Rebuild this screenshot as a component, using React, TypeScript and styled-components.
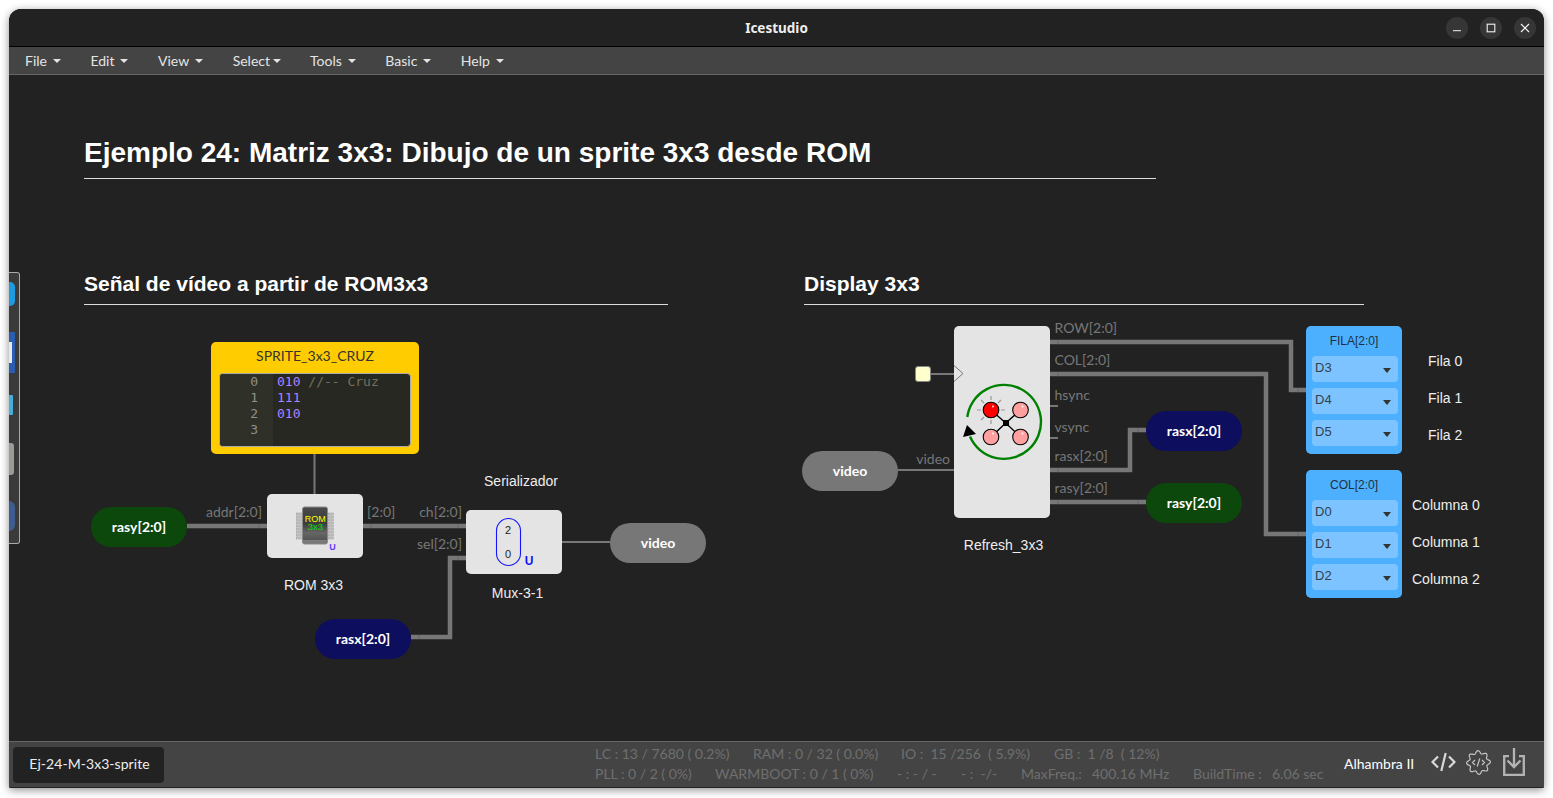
import React from "react";
import styled, { createGlobalStyle } from "styled-components";

const OX = 9;
const OY = 75;

const Global = createGlobalStyle`
  html, body { margin: 0; padding: 0; background: #fff; overflow: hidden; }
  #root { width: 1553px; height: 798px; }
`;

const Desktop = styled.div`
  width: 1553px;
  height: 798px;
  padding: 9px;
  box-sizing: border-box;
  background: #fff;
`;

const Win = styled.div`
  width: 1535px;
  height: 779px;
  display: flex;
  flex-direction: column;
  border-radius: 12px 12px 2px 2px;
  overflow: hidden;
  background: #222;
  box-shadow: 0 2px 8px rgba(0, 0, 0, 0.45);
  font-family: Lato, "Liberation Sans", sans-serif;
`;

const TitleBar = styled.div`
  height: 37px;
  flex: none;
  background: #222;
  border-bottom: 1px solid #000;
  display: flex;
  align-items: center;
  justify-content: center;
  position: relative;
`;

const TitleText = styled.div`
  font-family: "Noto Sans", sans-serif;
  font-weight: 700;
  font-size: 13.5px;
  color: #eee;
`;

const WinButtons = styled.div`
  position: absolute;
  right: 8px;
  top: 8px;
  display: flex;
  gap: 12px;
`;

const WinBtn = styled.div`
  width: 22px;
  height: 22px;
  border-radius: 50%;
  background: #363636;
  display: flex;
  align-items: center;
  justify-content: center;
`;

const MenuBar = styled.div`
  height: 27px;
  flex: none;
  background: #444;
  border-bottom: 1px solid #666;
  display: flex;
  align-items: center;
  padding-left: 1px;
`;

const MenuItem = styled.div<{ $tight?: boolean }>`
  padding: 0 ${(p) => (p.$tight ? "14px" : "14.5px")} 0 15px;
  font-size: 14px;
  color: #e4e4e4;
  display: flex;
  align-items: center;
  gap: ${(p) => (p.$tight ? "3px" : "6px")};
  line-height: 27px;
`;

const Caret = styled.span`
  width: 0;
  height: 0;
  border-left: 4px solid transparent;
  border-right: 4px solid transparent;
  border-top: 4px solid #e4e4e4;
  margin-top: 1px;
`;

const Canvas = styled.div`
  flex: 1;
  position: relative;
  background: #222;
  overflow: hidden;
`;

const WireLayer = styled.svg`
  position: absolute;
  left: 0;
  top: 0;
  width: 1535px;
  height: 666px;
`;

type PlacedProps = { $x: number; $y: number; $w?: number; $h?: number };

const Placed = styled.div.attrs<PlacedProps>((p) => ({
  style: {
    left: p.$x - OX,
    top: p.$y - OY,
    width: p.$w,
    height: p.$h,
  },
}))<PlacedProps>`
  position: absolute;
  box-sizing: border-box;
`;

const MainTitle = styled(Placed)`
  font-family: "Liberation Sans", sans-serif;
  font-weight: 700;
  font-size: 28px;
  line-height: 35px;
  color: #fff;
  white-space: nowrap;
  border-bottom: 1px solid #ddd;
`;

const SubTitle = styled(Placed)`
  font-family: "Liberation Sans", sans-serif;
  font-weight: 700;
  font-size: 21px;
  line-height: 26px;
  color: #fff;
  white-space: nowrap;
  border-bottom: 1px solid #ddd;
`;

const NodeBox = styled(Placed)`
  background: #e4e4e4;
  border-radius: 5px;
  display: flex;
  align-items: center;
  justify-content: center;
`;

const Pill = styled(Placed)<{ $bg: string }>`
  width: 96px;
  height: 40px;
  padding-bottom: 2px;
  border-radius: 20px;
  background: ${(p) => p.$bg};
  color: #fff;
  font-weight: 700;
  font-size: 14px;
  display: flex;
  align-items: center;
  justify-content: center;
`;

const PortLabel = styled(Placed)<{ $right?: boolean }>`
  font-size: 14px;
  line-height: 16px;
  color: #777;
  white-space: nowrap;
  ${(p) => (p.$right ? "transform: translateX(-100%);" : "")}
`;

const Caption = styled(Placed)`
  font-family: "Liberation Sans", sans-serif;
  font-size: 14px;
  line-height: 16px;
  color: #eee;
  white-space: nowrap;
`;

const CenterCaption = styled(Caption)`
  transform: translateX(-50%);
`;

const SpriteBlock = styled(Placed)`
  background: #ffcc00;
  border-radius: 5px;
  padding: 5px 8px 7px;
  display: flex;
  flex-direction: column;
  gap: 9px;
`;

const SpriteTitle = styled.div`
  font-size: 14px;
  line-height: 17px;
  color: #333;
  text-align: center;
`;

const Editor = styled.div`
  flex: 1;
  background: #272822;
  border: 1px solid #aaa;
  border-radius: 4px;
  display: flex;
  overflow: hidden;
  font-family: "DejaVu Sans Mono", monospace;
  font-size: 13px;
  line-height: 16px;
`;

const Gutter = styled.div`
  width: 53px;
  flex: none;
  background: #2f3129;
  color: #8f908a;
  text-align: right;
  padding-right: 15px;
  box-sizing: border-box;
`;

const Code = styled.div`
  padding-left: 4px;
  color: #ae81ff;
  white-space: pre;
`;

const Comment = styled.span`
  color: #75715e;
`;

const PinBlock = styled(Placed)`
  background: #4db0ff;
  border-radius: 5px;
  padding: 7px 4px 0 6px;
`;

const PinTitle = styled.div`
  font-family: "Liberation Sans", sans-serif;
  font-size: 12px;
  line-height: 16px;
  color: #1f3040;
  text-align: center;
  margin: 0 0 7px -2px;
`;

const PinRows = styled.div`
  display: flex;
  flex-direction: column;
  gap: 6px;
`;

const PinRow = styled.div`
  height: 26px;
  background: #7cc3ff;
  border-radius: 4px;
  display: flex;
  align-items: center;
  justify-content: space-between;
  padding: 0 7px 0 3px;
  font-family: "Liberation Sans", sans-serif;
  font-size: 13px;
  color: #33424d;
  line-height: 22px;
`;

const PinText = styled.span`
  margin-top: -3px;
`;

const PinCaret = styled.span`
  width: 0;
  height: 0;
  border-left: 4px solid transparent;
  border-right: 4px solid transparent;
  border-top: 5px solid #333;
  margin-top: 3px;
`;

const ClockPort = styled(Placed)`
  background: #ffffcc;
  border: 1px solid #888;
  border-radius: 3px;
`;

const Dock = styled(Placed)`
  background: #3a3a3a;
  border: 1px solid #aaa;
  border-left: none;
  border-radius: 0 3px 3px 0;
  overflow: hidden;
  display: flex;
  flex-direction: column;
  align-items: flex-start;
`;

const DockMark = styled.div<{ $bg: string; $w: number; $h: number; $top: number; $round?: number }>`
  flex: none;
  width: ${(p) => p.$w}px;
  height: ${(p) => p.$h}px;
  margin-top: ${(p) => p.$top}px;
  background: ${(p) => p.$bg};
  border-radius: 0 ${(p) => p.$round ?? 0}px ${(p) => p.$round ?? 0}px 0;
  display: flex;
  align-items: center;
`;

const DockInner = styled.div`
  width: 3px;
  height: 21px;
  background: #e8e8e8;
`;

const Footer = styled.div`
  height: 45px;
  flex: none;
  background: #444;
  border-top: 1px solid #666;
  border-bottom: 1px solid #222;
  display: flex;
  align-items: center;
  padding: 0 17px 0 4px;
`;

const FileTab = styled.div`
  width: 151px;
  height: 36px;
  padding: 0 0 2px 2px;
  box-sizing: border-box;
  background: #222;
  border-radius: 4px;
  color: #eee;
  font-size: 14px;
  letter-spacing: 0.05px;
  display: flex;
  align-items: center;
  justify-content: center;
  flex: none;
`;

const Stats = styled.div`
  margin: -2px 0 0 431px;
  width: 749px;
  flex: none;
  display: flex;
  flex-direction: column;
  color: #6f6f6f;
  font-size: 14px;
  line-height: 20px;
`;

const StatRow = styled.div`
  display: flex;
  white-space: pre;
`;

const Stat = styled.span<{ $w: number }>`
  width: ${(p) => p.$w}px;
  flex: none;
`;

const Board = styled.div`
  color: #fff;
  font-size: 14px;
  width: 87px;
  flex: none;
  margin-top: -3px;
`;

const ToolIcons = styled.div`
  display: flex;
  align-items: center;
  gap: 10px;
  margin-top: -5px;
`;

const SaveSvg = styled.svg`
  margin: 0 0 0 2px;
`;

const wires: { d: string; w: number }[] = [
  { d: "M314.5 454V494", w: 2 },
  { d: "M187 526H267", w: 4.5 },
  { d: "M363 526H466", w: 4.5 },
  { d: "M411 637H450V558H466", w: 4.5 },
  { d: "M562 542H610", w: 2 },
  { d: "M898 470H954", w: 2 },
  { d: "M931 374H954", w: 2 },
  { d: "M1050 342H1291V390H1306", w: 4.5 },
  { d: "M1050 374H1266V534H1306", w: 4.5 },
  { d: "M1050 406H1058", w: 2 },
  { d: "M1050 438H1058", w: 2 },
  { d: "M1050 470H1130V430H1146", w: 4.5 },
  { d: "M1050 502H1146", w: 4.5 },
];

const ticks: [number, number][] = [
  [259, 526], [371, 526], [458, 526], [458, 558], [419, 637],
  [1058, 342], [1058, 374], [1058, 470], [1058, 502], [1138, 430], [1138, 502],
  [1298, 390], [1298, 534],
];

const NAVY = "#0e0e5e";
const GREEN = "#0c470c";
const GREY = "#777777";

const gearPath = (() => {
  const pts: string[] = [];
  for (let i = 0; i < 96; i++) {
    const t = (i / 96) * Math.PI * 2;
    const r = 10.4 + 1.5 * Math.cos(8 * t + Math.PI / 8);
    pts.push(`${(12.5 + r * Math.cos(t)).toFixed(2)} ${(12.5 + r * Math.sin(t)).toFixed(2)}`);
  }
  return `M${pts.join("L")}Z`;
})();

function ChipIcon() {
  return (
    <svg width="44" height="48" viewBox="293 502 44 48">
      <defs>
        <linearGradient id="chipBody" x1="0" y1="0" x2="0" y2="1">
          <stop offset="0" stopColor="#4a4a4a" />
          <stop offset="0.45" stopColor="#3c3c3c" />
          <stop offset="0.7" stopColor="#666" />
          <stop offset="0.88" stopColor="#555" />
          <stop offset="0.89" stopColor="#808080" />
          <stop offset="1" stopColor="#707070" />
        </linearGradient>
      </defs>
      <g fill="#c4c4c4" stroke="#9a9a9a" strokeWidth="0.5">
        {Array.from({ length: 9 }).map((_, i) => (
          <React.Fragment key={i}>
            <rect x="296.5" y={513 + i * 3} width="6" height="2" />
            <rect x="328" y={513 + i * 3} width="5.5" height="2" />
          </React.Fragment>
        ))}
      </g>
      <rect x="302.5" y="507" width="25" height="37" rx="2" fill="url(#chipBody)" stroke="#8a8a8a" />
      <text x="315.3" y="521.5" textAnchor="middle" fontFamily="Liberation Sans, sans-serif" fontSize="9" fill="#ffff00">ROM</text>
      <text x="315.5" y="530" textAnchor="middle" fontFamily="Liberation Sans, sans-serif" fontSize="9.5" fill="#00e000">3x3</text>
      <text x="332.5" y="549.5" textAnchor="middle" fontFamily="Liberation Sans, sans-serif" fontSize="9" fontWeight="700" fill="#6a3cff">U</text>
    </svg>
  );
}

function MuxIcon() {
  return (
    <svg width="42" height="50" viewBox="493 517 42 50">
      <rect x="496.5" y="518.5" width="24" height="47" rx="12" fill="none" stroke="#1414ff" strokeWidth="1.1" />
      <text x="508" y="534" textAnchor="middle" fontFamily="Liberation Sans, sans-serif" fontSize="11" fill="#222">2</text>
      <text x="508" y="558" textAnchor="middle" fontFamily="Liberation Sans, sans-serif" fontSize="11" fill="#222">0</text>
      <text x="529" y="565" textAnchor="middle" fontFamily="Liberation Sans, sans-serif" fontSize="12" fontWeight="700" fill="#1414ff">U</text>
    </svg>
  );
}

function Led({ cx, cy, c }: { cx: number; cy: number; c: string }) {
  return (
    <g>
      <circle cx={cx} cy={cy} r="7.8" fill={c} stroke="#000" strokeWidth="1.1" />
      <circle cx={cx + 2} cy={cy - 3.5} r="1" fill="#fff" opacity="0.85" />
    </g>
  );
}

function RefreshIcon() {
  return (
    <svg width="96" height="192" viewBox="954 326 96 192">
      <path d="M967.3 417 A37 37 0 1 1 970 436.5" fill="none" stroke="#008000" strokeWidth="2.4" />
      <path d="M967 425 L963 437 L976 434 Z" fill="#000" />
      <path d="M991 410L1005.7 423M1020.5 410L1005.7 423M991 437L1005.7 423M1020.5 437L1005.7 423" stroke="#000" strokeWidth="1.4" />
      <rect x="1003" y="420" width="6" height="6" fill="#000" />
      <path d="M991 396V400M991 420V424M977 410H981M1001 410H1005M981 400L984 403M1001 400L998 403M981 420L984 417" stroke="#999" strokeWidth="1.2" fill="none" />
      <Led cx={991} cy={410} c="#ff0000" />
      <Led cx={1020.5} cy={410} c="#ffa0a0" />
      <Led cx={991} cy={437} c="#ffa0a0" />
      <Led cx={1020.5} cy={437} c="#ffa0a0" />
    </svg>
  );
}

function CodeIcon() {
  return (
    <svg width="25" height="24" viewBox="0 0 25 24" fill="none" stroke="#d8d8d8" strokeWidth="2.2">
      <path d="M7 6.5L1.5 12L7 17.5M18 6.5L23.5 12L18 17.5M14.7 3L10.3 21" />
    </svg>
  );
}

function GearCodeIcon() {
  return (
    <svg width="25" height="25" viewBox="0 0 25 25" fill="none" stroke="#c4c4c4" strokeWidth="1.2">
      <path d={gearPath} />
      <path d="M9 10L6.5 12.5L9 15M16 10L18.5 12.5L16 15M13.8 8.5L11.2 16.5" strokeWidth="1.2" />
    </svg>
  );
}

function SaveIcon() {
  return (
    <SaveSvg width="22" height="28" viewBox="0 0 22 28" fill="none" stroke="#b4b4b4" strokeWidth="2.3">
      <path d="M6 8.2H1.2V26.8H20.8V8.2H16" />
      <path d="M11 0V19M4.5 12.5L11 19L17.5 12.5" />
    </SaveSvg>
  );
}

function MinimizeGlyph() {
  return (
    <svg width="10" height="10" viewBox="0 0 10 10">
      <path d="M1 7.7H9" stroke="#f2f2f2" strokeWidth="1" />
    </svg>
  );
}

function MaximizeGlyph() {
  return (
    <svg width="10" height="10" viewBox="0 0 10 10">
      <rect x="1.2" y="1.2" width="7.6" height="7.6" fill="none" stroke="#f2f2f2" strokeWidth="1.1" />
    </svg>
  );
}

function CloseGlyph() {
  return (
    <svg width="10" height="10" viewBox="0 0 10 10">
      <path d="M1 1L9 9M9 1L1 9" stroke="#f2f2f2" strokeWidth="1.2" />
    </svg>
  );
}

export default function App() {
  return (
    <Desktop>
      <Global />
      <Win>
        <TitleBar>
          <TitleText>Icestudio</TitleText>
          <WinButtons>
            <WinBtn><MinimizeGlyph /></WinBtn>
            <WinBtn><MaximizeGlyph /></WinBtn>
            <WinBtn><CloseGlyph /></WinBtn>
          </WinButtons>
        </TitleBar>
        <MenuBar>
          <MenuItem>File<Caret /></MenuItem>
          <MenuItem>Edit<Caret /></MenuItem>
          <MenuItem>View<Caret /></MenuItem>
          <MenuItem $tight>Select<Caret /></MenuItem>
          <MenuItem>Tools<Caret /></MenuItem>
          <MenuItem>Basic<Caret /></MenuItem>
          <MenuItem>Help<Caret /></MenuItem>
        </MenuBar>
        <Canvas>
          <WireLayer viewBox={`${OX} ${OY} 1535 666`}>
            {wires.map((w, i) => (
              <path key={i} d={w.d} fill="none" stroke="#777" strokeWidth={w.w} />
            ))}
            {ticks.map(([x, y], i) => (
              <path key={i} d={`M${x} ${y - 2}V${y + 2}`} stroke="#666" strokeWidth="1" />
            ))}
          </WireLayer>

          <MainTitle $x={84} $y={135} $w={1072} $h={44}>Ejemplo 24: Matriz 3x3: Dibujo de un sprite 3x3 desde ROM</MainTitle>
          <SubTitle $x={84} $y={271} $w={584} $h={34}>Señal de vídeo a partir de ROM3x3</SubTitle>
          <SubTitle $x={804} $y={271} $w={560} $h={34}>Display 3x3</SubTitle>

          <Dock $x={9} $y={272} $w={11} $h={272}>
            <DockMark $top={9} $w={6} $h={24} $bg="#1e9be0" $round={5} />
            <DockMark $top={26} $w={6} $h={41} $bg="#2a5cb0"><DockInner /></DockMark>
            <DockMark $top={22} $w={4} $h={20} $bg="#45aedb" $round={1} />
            <DockMark $top={28} $w={5} $h={32} $bg="#9a9a96" $round={3} />
            <DockMark $top={26} $w={6} $h={30} $bg="#3f5c90" $round={6} />
          </Dock>

          <SpriteBlock $x={211} $y={342} $w={208} $h={112}>
            <SpriteTitle>SPRITE_3x3_CRUZ</SpriteTitle>
            <Editor>
              <Gutter>0<br />1<br />2<br />3</Gutter>
              <Code>010 <Comment>//-- Cruz</Comment>{"\n"}111{"\n"}010</Code>
            </Editor>
          </SpriteBlock>

          <Pill $x={91} $y={507} $bg={GREEN}>rasy[2:0]</Pill>
          <PortLabel $x={262} $y={504} $right>addr[2:0]</PortLabel>
          <NodeBox $x={267} $y={494} $w={96} $h={64}><ChipIcon /></NodeBox>
          <PortLabel $x={367} $y={504}>[2:0]</PortLabel>
          <CenterCaption $x={313.5} $y={577}>ROM 3x3</CenterCaption>
          <PortLabel $x={462} $y={504} $right>ch[2:0]</PortLabel>
          <PortLabel $x={462} $y={536} $right>sel[2:0]</PortLabel>
          <CenterCaption $x={521} $y={473}>Serializador</CenterCaption>
          <NodeBox $x={466} $y={510} $w={96} $h={64}><MuxIcon /></NodeBox>
          <CenterCaption $x={517.5} $y={585}>Mux-3-1</CenterCaption>
          <Pill $x={610} $y={523} $bg={GREY}>video</Pill>
          <Pill $x={315} $y={619} $bg={NAVY}>rasx[2:0]</Pill>

          <Pill $x={802} $y={451} $bg={GREY}>video</Pill>
          <PortLabel $x={950} $y={451} $right>video</PortLabel>
          <ClockPort $x={915} $y={366} $w={16} $h={16} />
          <NodeBox $x={954} $y={326} $w={96} $h={192}><RefreshIcon /></NodeBox>
          <WireLayer viewBox={`${OX} ${OY} 1535 666`}>
            <path d="M954 365.5L963 373.5L954 381.5" fill="none" stroke="#777" strokeWidth="1" />
          </WireLayer>
          <PortLabel $x={1054.5} $y={320}>ROW[2:0]</PortLabel>
          <PortLabel $x={1054.5} $y={352}>COL[2:0]</PortLabel>
          <PortLabel $x={1054.5} $y={387}>hsync</PortLabel>
          <PortLabel $x={1054.5} $y={419}>vsync</PortLabel>
          <PortLabel $x={1054.5} $y={448}>rasx[2:0]</PortLabel>
          <PortLabel $x={1054.5} $y={480}>rasy[2:0]</PortLabel>
          <CenterCaption $x={1003.5} $y={537}>Refresh_3x3</CenterCaption>
          <Pill $x={1146} $y={411} $bg={NAVY}>rasx[2:0]</Pill>
          <Pill $x={1146} $y={483} $bg={GREEN}>rasy[2:0]</Pill>

          <PinBlock $x={1306} $y={326} $w={96} $h={128}>
            <PinTitle>FILA[2:0]</PinTitle>
            <PinRows>
              {["D3", "D4", "D5"].map((d) => (
                <PinRow key={d}><PinText>{d}</PinText><PinCaret /></PinRow>
              ))}
            </PinRows>
          </PinBlock>
          <PinBlock $x={1306} $y={470} $w={96} $h={128}>
            <PinTitle>COL[2:0]</PinTitle>
            <PinRows>
              {["D0", "D1", "D2"].map((d) => (
                <PinRow key={d}><PinText>{d}</PinText><PinCaret /></PinRow>
              ))}
            </PinRows>
          </PinBlock>

          <Caption $x={1428} $y={353}>Fila 0</Caption>
          <Caption $x={1428} $y={390}>Fila 1</Caption>
          <Caption $x={1428} $y={427}>Fila 2</Caption>
          <Caption $x={1412} $y={497}>Columna 0</Caption>
          <Caption $x={1412} $y={534}>Columna 1</Caption>
          <Caption $x={1412} $y={571}>Columna 2</Caption>
        </Canvas>
        <Footer>
          <FileTab>Ej-24-M-3x3-sprite</FileTab>
          <Stats>
            <StatRow>
              <Stat $w={158}>LC : 13 / 7680 ( 0.2%)</Stat>
              <Stat $w={148}>RAM : 0 / 32 ( 0.0%)</Stat>
              <Stat $w={153}>IO :  15 /256  ( 5.9%)</Stat>
              <Stat $w={140}>GB :  1 /8  ( 12%)</Stat>
            </StatRow>
            <StatRow>
              <Stat $w={120}>PLL : 0 / 2 ( 0%)</Stat>
              <Stat $w={182}>WARMBOOT : 0 / 1 ( 0%)</Stat>
              <Stat $w={64}>- : - / -</Stat>
              <Stat $w={60}>- :  -/-</Stat>
              <Stat $w={71}>MaxFreq.:</Stat>
              <Stat $w={101}>400.16 MHz</Stat>
              <Stat $w={79}>BuildTime :</Stat>
              <Stat $w={60}>6.06 sec</Stat>
            </StatRow>
          </Stats>
          <Board>Alhambra II</Board>
          <ToolIcons>
            <CodeIcon />
            <GearCodeIcon />
            <SaveIcon />
          </ToolIcons>
        </Footer>
      </Win>
    </Desktop>
  );
}
